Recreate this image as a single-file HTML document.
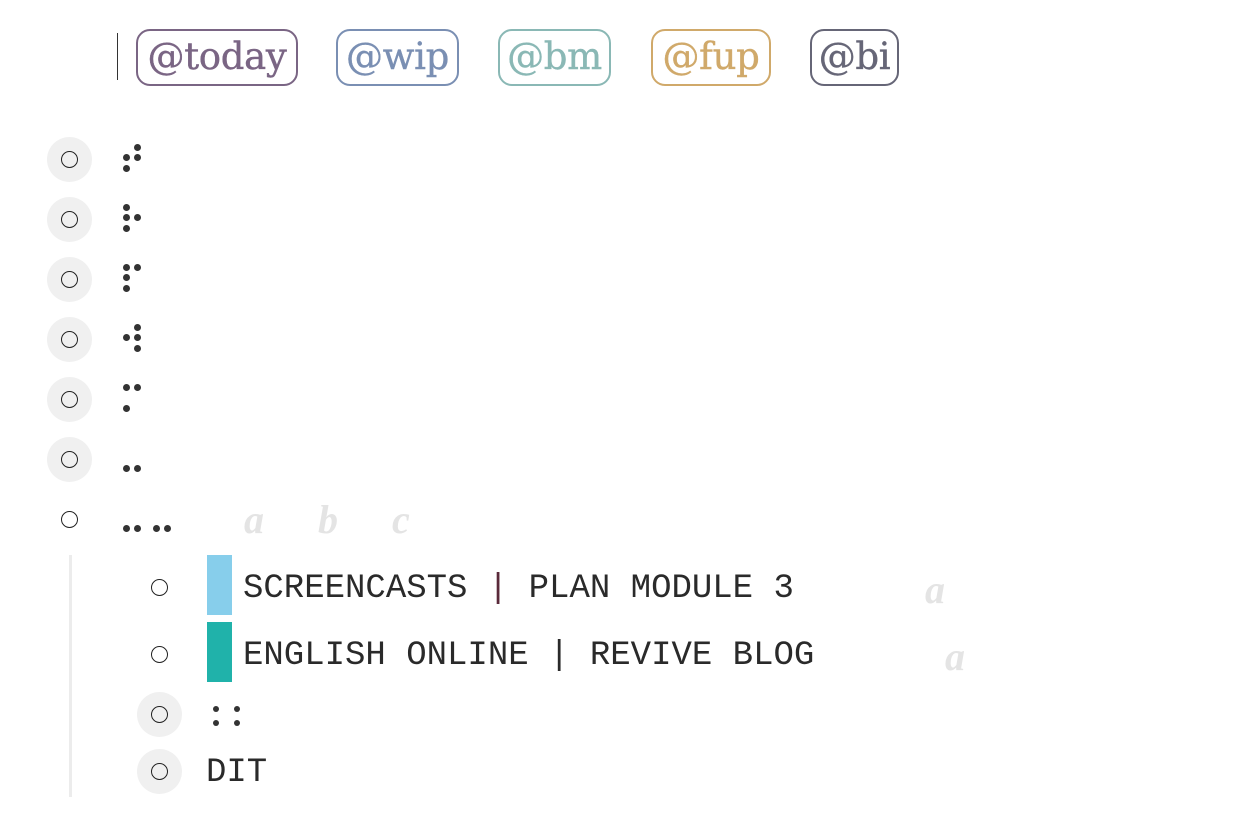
<!DOCTYPE html>
<html><head><meta charset="utf-8"><style>
body{margin:0;width:1237px;height:819px;background:#fff;position:relative;overflow:hidden;font-family:"Liberation Sans",sans-serif}
.a{position:absolute}
.tag{position:absolute;top:29px;border:2.5px solid;border-radius:14px;box-sizing:border-box;height:57px;display:flex;align-items:center;justify-content:center;font-family:"DejaVu Serif","Liberation Serif",serif;font-size:37px;letter-spacing:-0.3px;white-space:nowrap;padding-bottom:2px;-webkit-text-stroke:0.4px currentColor}
.bg{position:absolute;width:45px;height:45px;border-radius:50%;background:#f0f0f0}
.c{position:absolute;width:17px;height:17px;border:1.5px solid #222;border-radius:50%;box-sizing:border-box}
.d{position:absolute;width:7px;height:7px;border-radius:50%;background:#333}
.m{position:absolute;font-family:"Liberation Mono",monospace;font-size:34px;color:#2a2a2a;white-space:pre;line-height:1}
.g{position:absolute;font-family:"Liberation Serif",serif;font-style:italic;font-weight:bold;font-size:40px;color:#e4e4e4;line-height:1}
</style></head><body>
<div class="a" style="left:117px;top:33px;width:1px;height:47px;background:#333"></div>
<div class="tag" style="left:136px;width:162px;color:#7a6584;border-color:#7a6584">@today</div>
<div class="tag" style="left:336px;width:123px;color:#7a8fb3;border-color:#7a8fb3">@wip</div>
<div class="tag" style="left:498px;width:113px;color:#8ab8b5;border-color:#8ab8b5">@bm</div>
<div class="tag" style="left:651px;width:120px;color:#d0a96a;border-color:#d0a96a">@fup</div>
<div class="tag" style="left:810px;width:89px;color:#666677;border-color:#666677">@bi</div>

<div class="bg" style="left:47px;top:137px"></div><div class="c" style="left:61px;top:151px"></div>
<div class="d" style="left:134px;top:144px"></div><div class="d" style="left:123px;top:154px"></div><div class="d" style="left:134px;top:154px"></div><div class="d" style="left:123px;top:165px"></div>

<div class="bg" style="left:47px;top:197px"></div><div class="c" style="left:61px;top:211px"></div>
<div class="d" style="left:123px;top:204px"></div><div class="d" style="left:123px;top:214px"></div><div class="d" style="left:134px;top:214px"></div><div class="d" style="left:123px;top:225px"></div>

<div class="bg" style="left:47px;top:257px"></div><div class="c" style="left:61px;top:271px"></div>
<div class="d" style="left:123px;top:264px"></div><div class="d" style="left:134px;top:264px"></div><div class="d" style="left:123px;top:274px"></div><div class="d" style="left:123px;top:285px"></div>

<div class="bg" style="left:47px;top:317px"></div><div class="c" style="left:61px;top:331px"></div>
<div class="d" style="left:134px;top:324px"></div><div class="d" style="left:123px;top:334px"></div><div class="d" style="left:134px;top:334px"></div><div class="d" style="left:134px;top:345px"></div>

<div class="bg" style="left:47px;top:377px"></div><div class="c" style="left:61px;top:391px"></div>
<div class="d" style="left:123px;top:384px"></div><div class="d" style="left:134px;top:384px"></div><div class="d" style="left:123px;top:405px"></div>

<div class="bg" style="left:47px;top:437px"></div><div class="c" style="left:61px;top:451px"></div>
<div class="d" style="left:123px;top:465px"></div><div class="d" style="left:134px;top:465px"></div>

<div class="c" style="left:61px;top:511px"></div>
<div class="d" style="left:123px;top:525px"></div><div class="d" style="left:134px;top:525px"></div><div class="d" style="left:153px;top:525px"></div><div class="d" style="left:164px;top:525px"></div>
<div class="g" style="left:244px;top:500px">a</div>
<div class="g" style="left:318px;top:500px">b</div>
<div class="g" style="left:392px;top:500px">c</div>

<div class="a" style="left:69px;top:555px;width:3px;height:242px;background:#ececec"></div>

<div class="c" style="left:151px;top:579px"></div>
<div class="a" style="left:207px;top:555px;width:25px;height:60px;background:#87ceeb"></div>
<div class="m" style="left:243px;top:572px">SCREENCASTS <span style="color:#5a2a3a">|</span> PLAN MODULE 3</div>
<div class="g" style="left:925px;top:570px">a</div>

<div class="c" style="left:151px;top:646px"></div>
<div class="a" style="left:207px;top:622px;width:25px;height:60px;background:#20b2aa"></div>
<div class="m" style="left:243px;top:639px">ENGLISH ONLINE | REVIVE BLOG</div>
<div class="g" style="left:945px;top:637px">a</div>

<div class="bg" style="left:137px;top:692px"></div><div class="c" style="left:151px;top:706px"></div>
<div class="d" style="left:213px;top:706px;width:6px;height:6px"></div><div class="d" style="left:213px;top:720px;width:6px;height:6px"></div>
<div class="d" style="left:234px;top:706px;width:6px;height:6px"></div><div class="d" style="left:234px;top:720px;width:6px;height:6px"></div>

<div class="bg" style="left:137px;top:749px"></div><div class="c" style="left:151px;top:763px"></div>
<div class="m" style="left:206px;top:756px">DIT</div>
</body></html>
